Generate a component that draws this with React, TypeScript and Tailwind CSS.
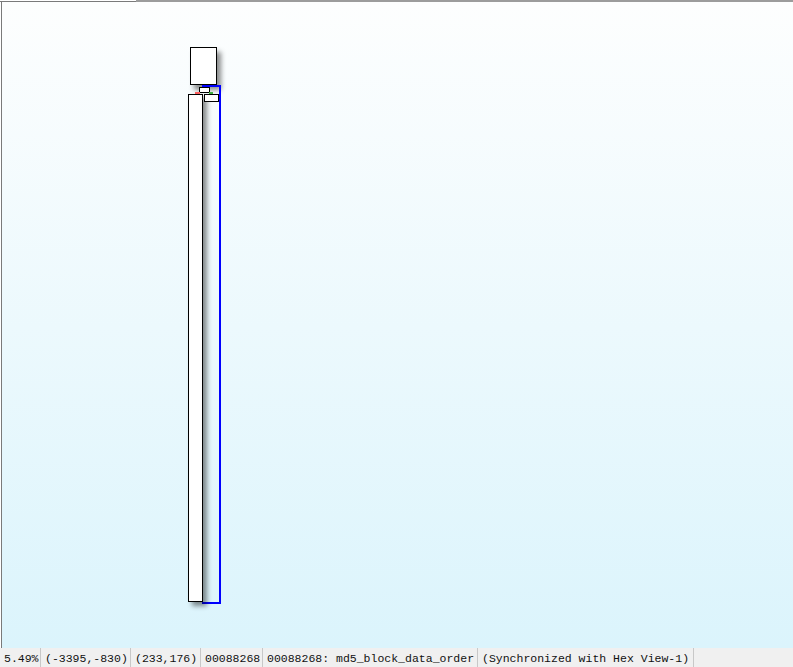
import React from "react";

const segs: { text: string; w: number }[] = [
  { text: "5.49%", w: 41 },
  { text: "(-3395,-830)", w: 90 },
  { text: "(233,176)", w: 70 },
  { text: "00088268", w: 62 },
  { text: "00088268: md5_block_data_order", w: 215 },
  { text: "(Synchronized with Hex View-1)", w: 216 },
];

export default function App() {
  return (
    <div className="w-[793px] h-[667px] flex flex-col bg-[#f0f0f0] overflow-hidden">
      <div className="h-[2px] flex shrink-0">
        <div className="w-[136px] flex flex-col">
          <div className="h-px bg-white" />
          <div className="h-px bg-[#7a7a7a]" />
        </div>
        <div className="flex-1 bg-[#9c9c9c]" />
      </div>
      <div className="flex-1 flex">
        <div className="w-px bg-white" />
        <div className="w-px bg-[#7a7a7a]" />
        <div className="flex-1 relative bg-gradient-to-b from-[#fdfefe] to-[#dbf4fc]">
          {/* top node */}
          <div className="absolute left-[188px] top-[45px] w-[27px] h-[38px] bg-white border border-black shadow-[4px_5px_5px_rgba(0,0,0,0.45)]" />
          {/* blue edge */}
          <div className="absolute left-[200px] top-[83px] w-[19px] h-[519px] border-t-2 border-r-2 border-b-2 border-[#0000ff]" />
          {/* small node */}
          <div className="absolute left-[197px] top-[85px] w-[11px] h-[6px] bg-white border border-black" />
          {/* red / green edges */}
          <div className="absolute left-[193px] top-[90px] w-[5px] h-[2px] bg-[#ff6060]" />
          <div className="absolute left-[207px] top-[90px] w-[4px] h-[2px] bg-[#40b040]" />
          {/* tall node */}
          <div className="absolute left-[186px] top-[92px] w-[15px] h-[508px] bg-white border border-black shadow-[4px_4px_5px_rgba(0,0,0,0.45)]" />
          {/* right small node */}
          <div className="absolute left-[202px] top-[92px] w-[15px] h-[8px] bg-white border border-black" />
        </div>
      </div>
      <div className="h-[19px] shrink-0 flex items-center bg-[#f0f0f0] font-['Liberation_Mono',monospace] text-[11.5px] text-[#111] leading-none">
        {segs.map((s) => (
          <div
            key={s.text}
            className="h-full flex items-center pl-[4px] pt-[2px] border-r border-[#c8c8c8] whitespace-pre shrink-0"
            style={{ width: s.w }}
          >
            {s.text}
          </div>
        ))}
      </div>
    </div>
  );
}
